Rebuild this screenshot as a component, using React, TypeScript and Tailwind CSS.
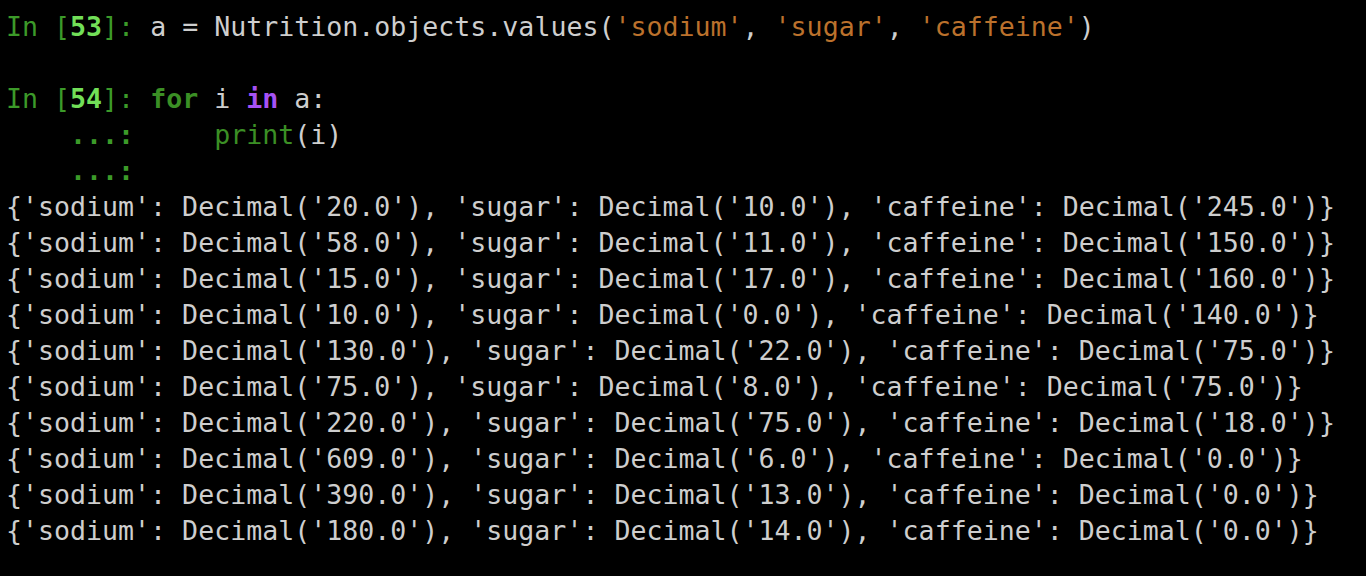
import React from "react";

const rows = [
    ["20.0", "10.0", "245.0"],
    ["58.0", "11.0", "150.0"],
    ["15.0", "17.0", "160.0"],
    ["10.0", "0.0", "140.0"],
    ["130.0", "22.0", "75.0"],
    ["75.0", "8.0", "75.0"],
    ["220.0", "75.0", "18.0"],
    ["609.0", "6.0", "0.0"],
    ["390.0", "13.0", "0.0"],
    ["180.0", "14.0", "0.0"],
];

const Prompt = ({ n }: { n: number }) => (
    <>
        <span className="text-[#3c9a29]">In [</span>
        <span className="text-[#72df58] font-bold">{n}</span>
        <span className="text-[#3c9a29]">]: </span>
    </>
);

const Cont = () => <span className="text-[#3c9a29] font-bold">{"    ...: "}</span>;

const Str = ({ s }: { s: string }) => <span className="text-[#bb712c]">'{s}'</span>;

export default function App() {
    return (
        <div
            className="w-[1366px] h-[576px] bg-black text-[#cecece] text-[26.6px] leading-[36px] pl-[6px] pt-[9px] whitespace-pre overflow-hidden"
            style={{ fontFamily: "'DejaVu Sans Mono', monospace" }}
        >
            <div>
                <Prompt n={53} />
                {"a = Nutrition.objects.values("}
                <Str s="sodium" />
                {", "}
                <Str s="sugar" />
                {", "}
                <Str s="caffeine" />
                {")"}
            </div>
            <div>{" "}</div>
            <div>
                <Prompt n={54} />
                <span className="text-[#3b8f25] font-bold">for</span>
                {" i "}
                <span className="text-[#a652f5] font-bold">in</span>
                {" a:"}
            </div>
            <div>
                <Cont />
                {"    "}
                <span className="text-[#3b8f25]">print</span>
                {"(i)"}
            </div>
            <div>
                <Cont />
            </div>
            {rows.map((r, i) => (
                <div key={i}>
                    {`{'sodium': Decimal('${r[0]}'), 'sugar': Decimal('${r[1]}'), 'caffeine': Decimal('${r[2]}')}`}
                </div>
            ))}
        </div>
    );
}
